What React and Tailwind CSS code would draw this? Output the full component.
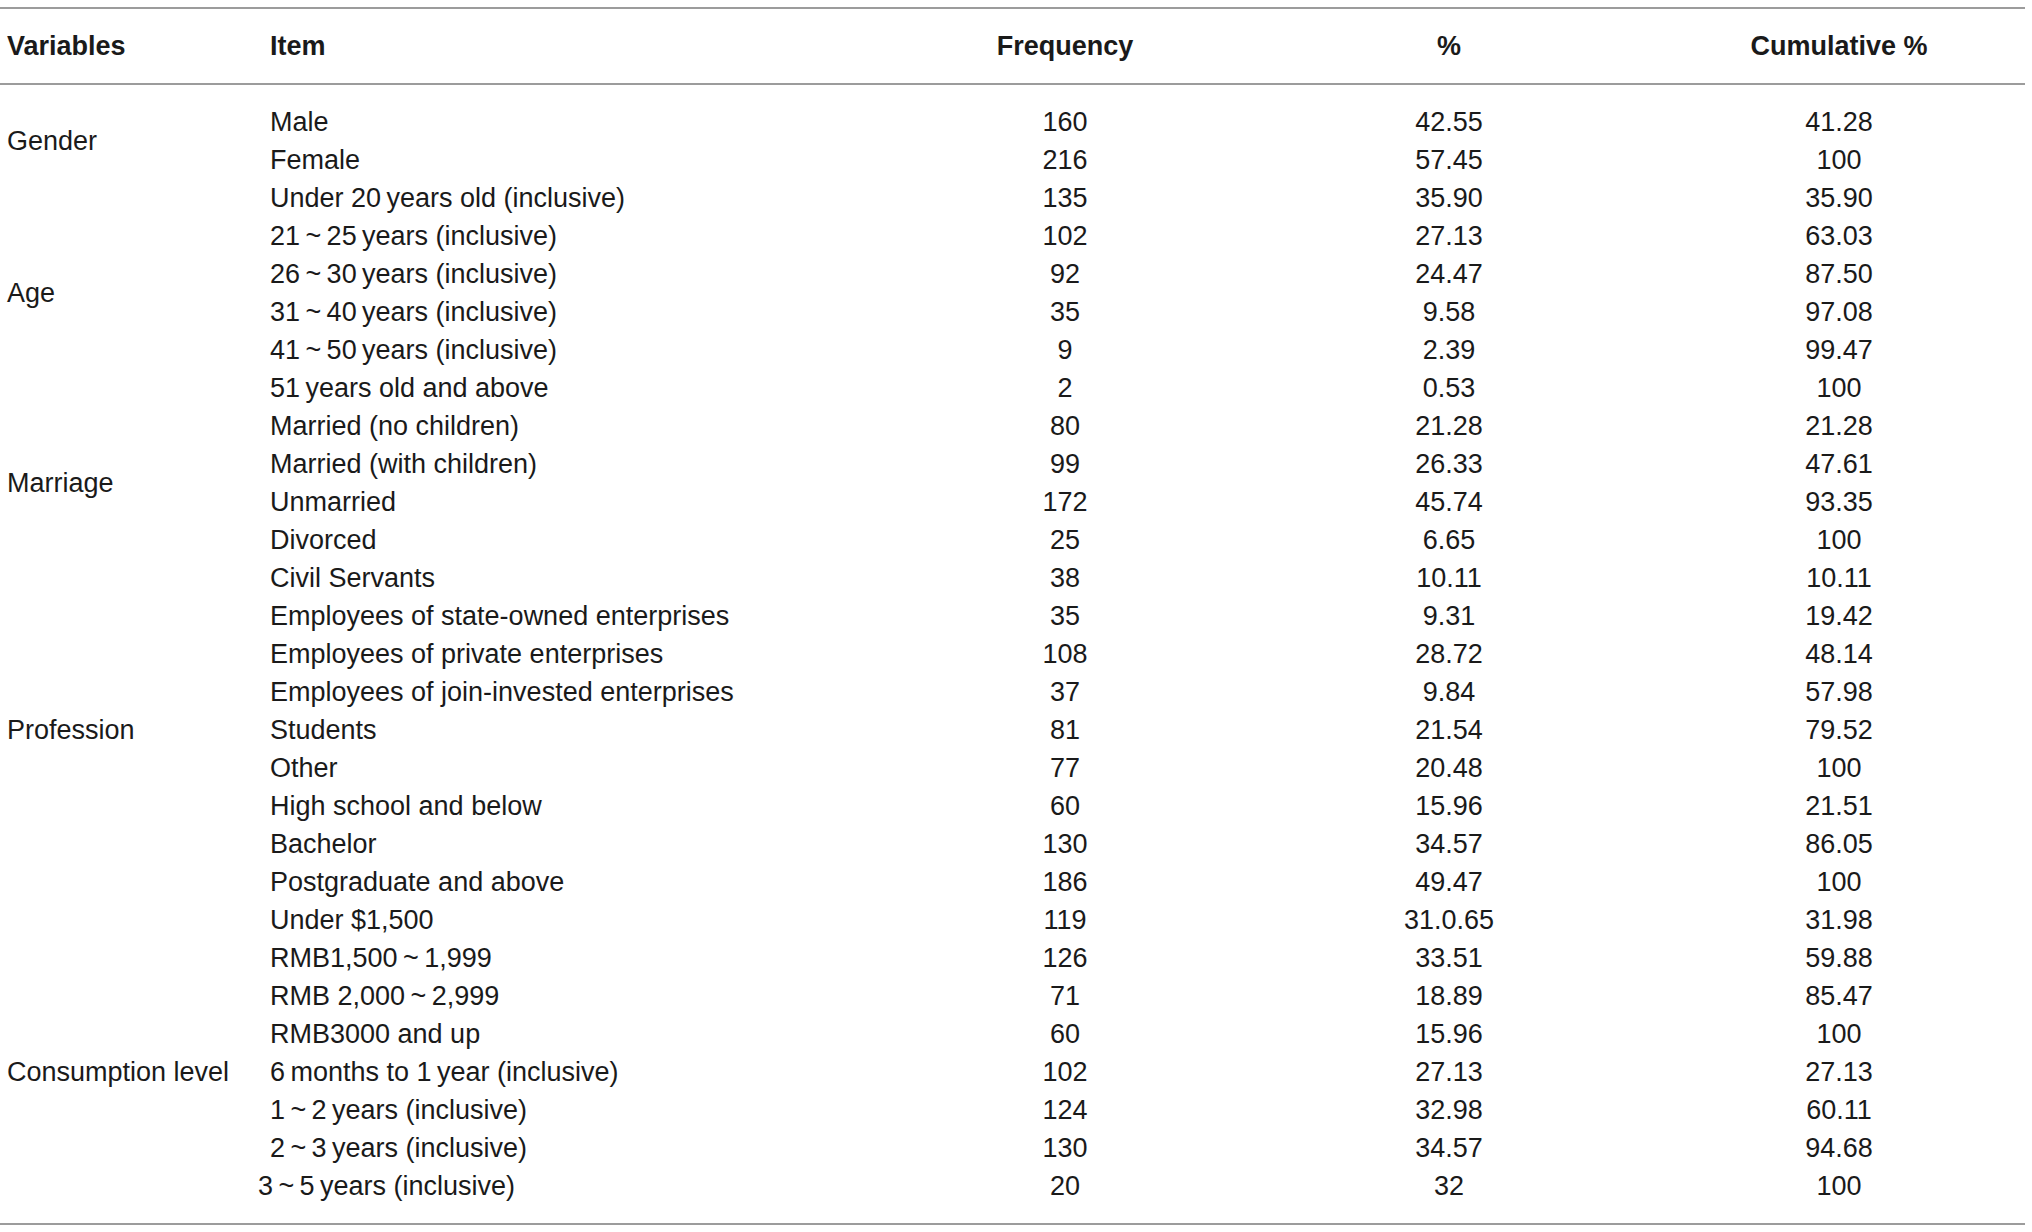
import React from "react";

const rows = [
  ["Male", "160", "42.55", "41.28"],
  ["Female", "216", "57.45", "100"],
  ["Under 20\u2009years old (inclusive)", "135", "35.90", "35.90"],
  ["21\u2009~\u200925\u2009years (inclusive)", "102", "27.13", "63.03"],
  ["26\u2009~\u200930\u2009years (inclusive)", "92", "24.47", "87.50"],
  ["31\u2009~\u200940\u2009years (inclusive)", "35", "9.58", "97.08"],
  ["41\u2009~\u200950\u2009years (inclusive)", "9", "2.39", "99.47"],
  ["51\u2009years old and above", "2", "0.53", "100"],
  ["Married (no children)", "80", "21.28", "21.28"],
  ["Married (with children)", "99", "26.33", "47.61"],
  ["Unmarried", "172", "45.74", "93.35"],
  ["Divorced", "25", "6.65", "100"],
  ["Civil Servants", "38", "10.11", "10.11"],
  ["Employees of state-owned enterprises", "35", "9.31", "19.42"],
  ["Employees of private enterprises", "108", "28.72", "48.14"],
  ["Employees of join-invested enterprises", "37", "9.84", "57.98"],
  ["Students", "81", "21.54", "79.52"],
  ["Other", "77", "20.48", "100"],
  ["High school and below", "60", "15.96", "21.51"],
  ["Bachelor", "130", "34.57", "86.05"],
  ["Postgraduate and above", "186", "49.47", "100"],
  ["Under $1,500", "119", "31.0.65", "31.98"],
  ["RMB1,500\u2009~\u20091,999", "126", "33.51", "59.88"],
  ["RMB 2,000\u2009~\u20092,999", "71", "18.89", "85.47"],
  ["RMB3000 and up", "60", "15.96", "100"],
  ["6\u2009months to 1\u2009year (inclusive)", "102", "27.13", "27.13"],
  ["1\u2009~\u20092\u2009years (inclusive)", "124", "32.98", "60.11"],
  ["2\u2009~\u20093\u2009years (inclusive)", "130", "34.57", "94.68"],
  ["3\u2009~\u20095\u2009years (inclusive)", "20", "32", "100"],
];

// variable label cells keyed by starting row index
const groups = {
  0: { label: "Gender", span: 2, top: false },
  2: { label: "Age", span: 6, top: false },
  8: { label: "Marriage", span: 4, top: false },
  12: { label: "Profession", span: 9, top: false },
  21: { label: "", span: 4, top: false },
  25: { label: "Consumption level", span: 4, top: true },
};

export default function App() {
  return (
    <div
      className="bg-white w-[2032px] h-[1232px] pt-[7px] text-[#1a1a1a]"
      style={{ fontFamily: '"Liberation Sans", Arial, sans-serif' }}
    >
      <table className="w-[2025px] table-fixed border-collapse text-[27px] leading-[38px]">
        <colgroup>
          <col className="w-[263px]" />
          <col className="w-[637px]" />
          <col className="w-[330px]" />
          <col className="w-[438px]" />
          <col className="w-[342px]" />
          <col className="w-[15px]" />
        </colgroup>
        <thead>
          <tr className="h-[76px] border-t-2 border-b-2 border-[#9c9c9c]">
            <th className="text-left font-bold pl-[7px] align-middle">Variables</th>
            <th className="text-left font-bold pl-[7px] align-middle">Item</th>
            <th className="text-center font-bold align-middle">Frequency</th>
            <th className="text-center font-bold align-middle">%</th>
            <th className="text-center font-bold align-middle">Cumulative %</th>
            <th></th>
          </tr>
        </thead>
        <tbody className="border-b-2 border-[#9c9c9c]">
          <tr className="h-[19px]">
            <td colSpan={6}></td>
          </tr>
          {rows.map((r, i) => {
            const g = groups[i];
            return (
              <tr key={i} className="h-[38px]">
                {g && (
                  <td
                    rowSpan={g.span}
                    className={
                      "pl-[7px] whitespace-nowrap " +
                      (g.top ? "align-top" : "align-middle")
                    }
                  >
                    {g.label}
                  </td>
                )}
                <td className="whitespace-nowrap p-0">
                  <div className={i === 28 ? "-ml-[5px]" : "pl-[7px]"}>{r[0]}</div>
                </td>
                <td className="text-center">{r[1]}</td>
                <td className="text-center">{r[2]}</td>
                <td className="text-center">{r[3]}</td>
                <td></td>
              </tr>
            );
          })}
          <tr className="h-[19px]">
            <td colSpan={6}></td>
          </tr>
        </tbody>
      </table>
    </div>
  );
}
